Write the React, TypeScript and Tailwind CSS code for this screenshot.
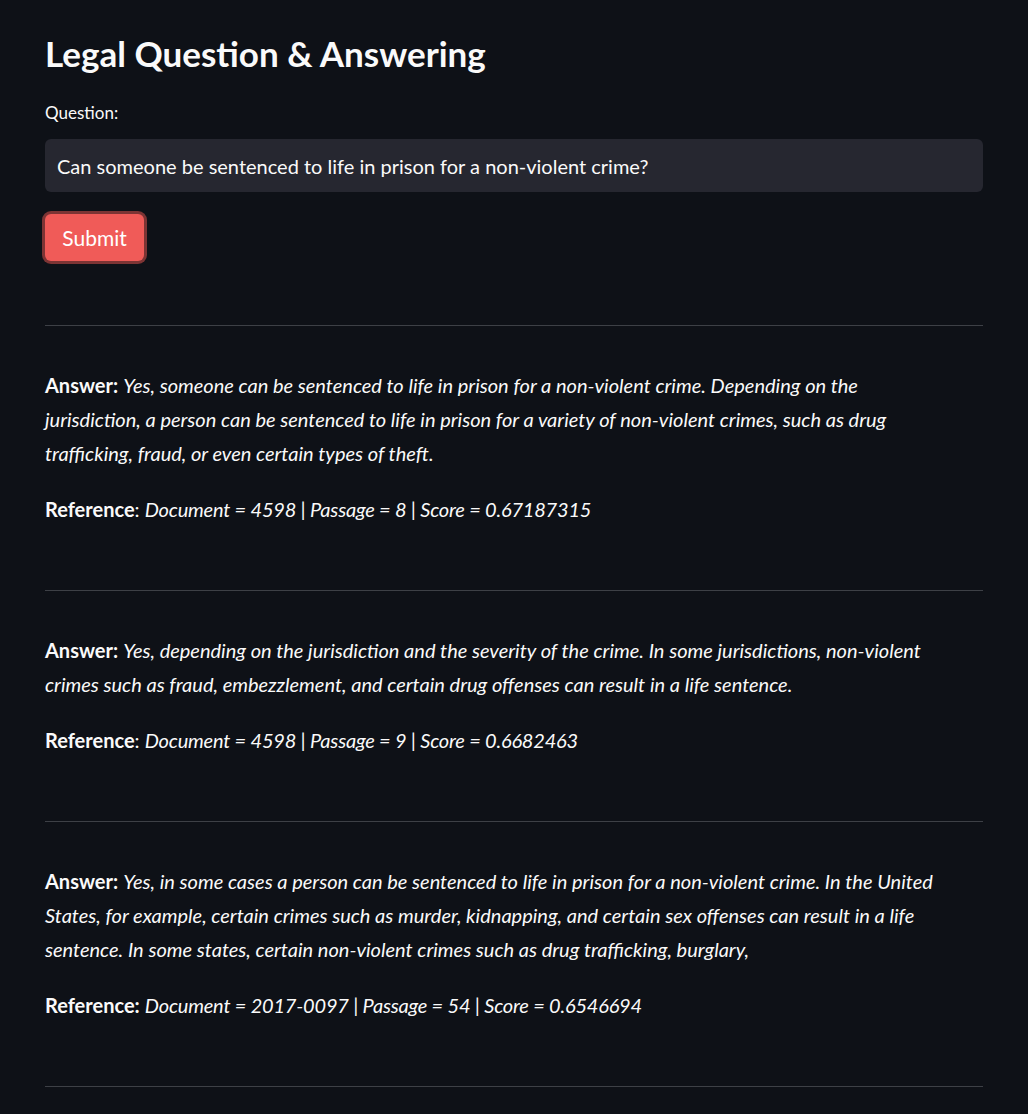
import { FC } from 'react';

interface Result {
  answer: string;
  document: string;
  passage: number;
  score: string;
  boldColon?: boolean;
}

const results: Result[] = [
  {
    answer:
      'Yes, someone can be sentenced to life in prison for a non-violent crime. Depending on the jurisdiction, a person can be sentenced to life in prison for a variety of non-violent crimes, such as drug trafficking, fraud, or even certain types of theft.',
    document: '4598',
    passage: 8,
    score: '0.67187315',
  },
  {
    answer:
      'Yes, depending on the jurisdiction and the severity of the crime. In some jurisdictions, non-violent crimes such as fraud, embezzlement, and certain drug offenses can result in a life sentence.',
    document: '4598',
    passage: 9,
    score: '0.6682463',
  },
  {
    answer:
      'Yes, in some cases a person can be sentenced to life in prison for a non-violent crime. In the United States, for example, certain crimes such as murder, kidnapping, and certain sex offenses can result in a life sentence. In some states, certain non-violent crimes such as drug trafficking, burglary,',
    document: '2017-0097',
    passage: 54,
    score: '0.6546694',
    boldColon: true,
  },
];

const Divider: FC = () => <hr className="border-0 border-t border-[#3d4046]" />;

const ResultBlock: FC<{ r: Result }> = ({ r }) => (
  <div className="pt-[42px] pb-[64px]">
    <p className="max-w-[900px] leading-[34px]">
      <b className="font-bold">Answer:</b> <i>{r.answer}</i>
    </p>
    <p className="mt-[22px] leading-[34px]">
      <b className="font-bold">Reference{r.boldColon ? ':' : ''}</b>
      {r.boldColon ? '' : ':'}{' '}
      <i className="tracking-[-0.2px]">
        Document = {r.document} | Passage = {r.passage} | Score = {r.score}
      </i>
    </p>
  </div>
);

const App: FC = () => (
  <div
    className="min-h-screen bg-[#0e1117] text-[#fafafa]"
    style={{ fontFamily: 'Lato, "Noto Sans", sans-serif' }}
  >
    <div className="px-[45px] pt-[31px]">
      <h1 className="text-[35px] font-bold leading-[44px]">Legal Question &amp; Answering</h1>
      <div className="mt-[26px] text-[17px] leading-[24px]">Question:</div>
      <div className="mt-[14px] flex h-[53px] items-center rounded-md bg-[#262730] px-3 text-[20px]">
        Can someone be sentenced to life in prison for a non-violent crime?
      </div>
      <div className="mt-[22px]">
        <button
          type="button"
          className="h-[47px] w-[99px] rounded-md bg-[#f05b58] text-[21px] text-white ring-[3px] ring-[#7d3434]"
        >
          Submit
        </button>
      </div>
      <div className="mt-[64px] text-[20px]">
        <Divider />
        {results.map((r) => (
          <div key={r.document + r.passage}>
            <ResultBlock r={r} />
            <Divider />
          </div>
        ))}
      </div>
    </div>
  </div>
);

export default App;
